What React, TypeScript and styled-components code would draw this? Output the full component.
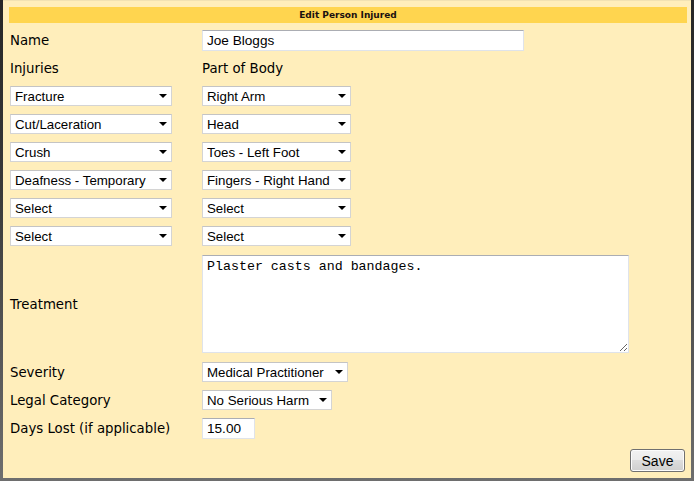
import React from "react";
import styled, { createGlobalStyle } from "styled-components";

const Global = createGlobalStyle`
  html, body { margin: 0; padding: 0; }
  body { width: 694px; height: 481px; overflow: hidden; background: #ffeebb; }
  * { box-sizing: border-box; }
`;

const Frame = styled.div`
  width: 694px;
  height: 481px;
  padding: 0 3px 3px 3px;
  background: linear-gradient(to bottom, #262626 0%, #3a3a3a 40%, #6e6e6e 100%);
  display: flex;
`;

const Panel = styled.div`
  flex: 1;
  background: #ffeebb;
  border-top: 1px solid #f2e2b2;
  padding: 6px 6px 0 7px;
  display: flex;
  flex-direction: column;
  font-family: "DejaVu Sans", Verdana, sans-serif;
  font-size: 13.3px;
  color: #000;
`;

const Header = styled.div`
  height: 16px;
  margin: 0 -2px 7px -1px;
  background: #ffd54f;
  font-family: "DejaVu Sans", Verdana, sans-serif;
  font-weight: bold;
  font-size: 9px;
  line-height: 16px;
  text-align: center;
  color: #1a1010;
`;

const Row = styled.div<{ $h: number; $mb: number }>`
  display: grid;
  grid-template-columns: 192px 1fr;
  align-items: center;
  height: ${(p) => p.$h}px;
  margin-bottom: ${(p) => p.$mb}px;
`;

const Label = styled.div`
  white-space: nowrap;
`;

const TextInput = styled.input<{ $w: number }>`
  width: ${(p) => p.$w}px;
  height: 21px;
  padding: 0 0 0 4px;
  border: 1px solid #dfe3ea;
  border-top-color: #abadb3;
  background: #fff;
  font-family: "Liberation Sans", Arial, sans-serif;
  font-size: 13.6px;
  color: #000;
  outline: none;
`;

const SelectWrap = styled.div<{ $w: number }>`
  position: relative;
  width: ${(p) => p.$w}px;
  height: 20px;
  &::after {
    content: "";
    position: absolute;
    right: 5px;
    top: 8px;
    border-left: 4px solid transparent;
    border-right: 4px solid transparent;
    border-top: 4px solid #000;
    pointer-events: none;
  }
`;

const Select = styled.select`
  appearance: none;
  -webkit-appearance: none;
  width: 100%;
  height: 100%;
  margin: 0;
  padding: 0 0 0 4px;
  border: 1px solid #d4d4d4;
  border-top-color: #c4c4c4;
  border-radius: 0;
  background: #fff;
  font-family: "Liberation Sans", Arial, sans-serif;
  font-size: 13.3px;
  color: #000;
  outline: none;
`;

const TextArea = styled.textarea`
  width: 427px;
  height: 98px;
  padding: 3px 4px;
  border: 1px solid #dfe3ea;
  border-top-color: #abadb3;
  background: #fff;
  font-family: "Liberation Mono", "Courier New", monospace;
  font-size: 13.3px;
  line-height: 15px;
  color: #000;
  resize: both;
  outline: none;
`;

const Footer = styled.div`
  display: flex;
  justify-content: flex-end;
`;

const Button = styled.button`
  width: 55px;
  height: 23px;
  padding: 0;
  border: 1px solid #707070;
  border-radius: 3px;
  background: linear-gradient(to bottom, #f2f2f2 0%, #ebebeb 49%, #dddddd 50%, #cfcfcf 100%);
  box-shadow: inset 0 0 0 1px #fcfcfc;
  font-family: "Liberation Sans", Arial, sans-serif;
  font-size: 14px;
  color: #000;
`;

type Pair = [string, string];
const injuries: Pair[] = [
  ["Fracture", "Right Arm"],
  ["Cut/Laceration", "Head"],
  ["Crush", "Toes - Left Foot"],
  ["Deafness - Temporary", "Fingers - Right Hand"],
  ["Select", "Select"],
  ["Select", "Select"],
];

function Dropdown({ value, width }: { value: string; width: number }) {
  return (
    <SelectWrap $w={width}>
      <Select defaultValue={value}>
        <option>{value}</option>
      </Select>
    </SelectWrap>
  );
}

export default function App() {
  return (
    <>
      <Global />
      <Frame>
        <Panel>
          <Header>Edit Person Injured</Header>
          <Row $h={21} $mb={8}>
            <Label>Name</Label>
            <TextInput $w={322} defaultValue="Joe Bloggs" />
          </Row>
          <Row $h={19} $mb={8}>
            <Label>Injuries</Label>
            <Label>Part of Body</Label>
          </Row>
          {injuries.map(([a, b], i) => (
            <Row key={i} $h={20} $mb={i === injuries.length - 1 ? 9 : 8}>
              <Dropdown value={a} width={162} />
              <Dropdown value={b} width={149} />
            </Row>
          ))}
          <Row $h={98} $mb={9}>
            <Label>Treatment</Label>
            <TextArea defaultValue="Plaster casts and bandages." />
          </Row>
          <Row $h={20} $mb={8}>
            <Label>Severity</Label>
            <Dropdown value="Medical Practitioner" width={146} />
          </Row>
          <Row $h={20} $mb={8}>
            <Label>Legal Category</Label>
            <Dropdown value="No Serious Harm" width={130} />
          </Row>
          <Row $h={21} $mb={10}>
            <Label>Days Lost (if applicable)</Label>
            <TextInput $w={53} defaultValue="15.00" />
          </Row>
          <Footer>
            <Button>Save</Button>
          </Footer>
        </Panel>
      </Frame>
    </>
  );
}
